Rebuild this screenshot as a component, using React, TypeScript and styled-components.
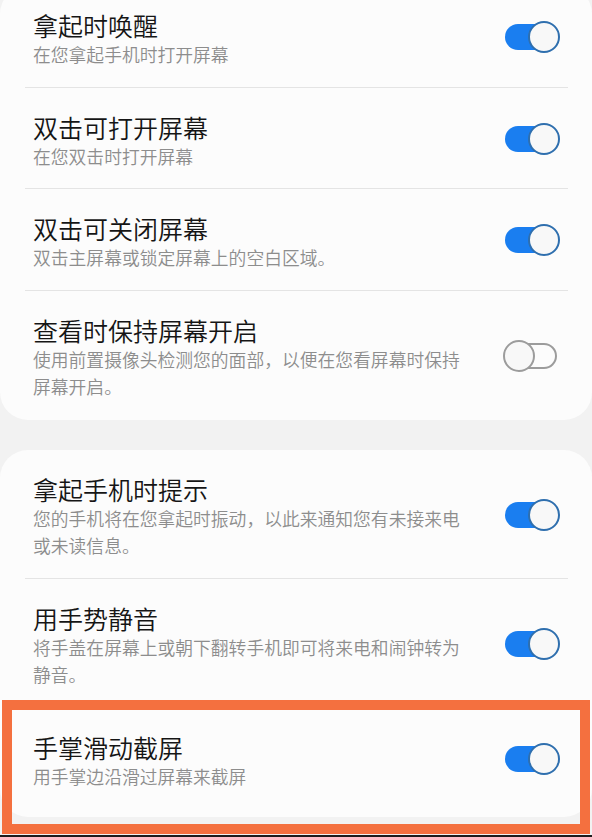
import React from "react";
import styled, { createGlobalStyle } from "styled-components";

const GlobalStyle = createGlobalStyle`
  html, body {
    margin: 0;
    padding: 0;
    background: #f2f2f2;
  }
  body {
    font-family: "Noto Sans CJK SC", "Noto Sans", sans-serif;
  }
`;

const Screen = styled.div`
  width: 592px;
  height: 837px;
  overflow: hidden;
  background: #f2f2f2;
  display: flex;
  flex-direction: column;
`;

const List = styled.div`
  margin-top: -14px;
  display: flex;
  flex-direction: column;
  gap: 30px;
`;

interface ICard {
  bottomPad?: number;
}

const Card = styled.div<ICard>`
  background: #fcfcfc;
  border-radius: 28px;
  padding-bottom: ${props => props.bottomPad || 0}px;
`;

interface IRow {
  divider: boolean;
}

const Row = styled.div<IRow>`
  position: relative;
  display: flex;
  align-items: center;
  justify-content: space-between;
  padding: 23px 33px 19px 33px;
  &::after {
    content: "";
    display: ${props => (props.divider ? "block" : "none")};
    position: absolute;
    left: 25px;
    right: 24px;
    bottom: 0;
    height: 1px;
    background: #e4e4e4;
  }
`;

const TextBlock = styled.div`
  width: 436px;
  display: flex;
  flex-direction: column;
`;

const Title = styled.span`
  font-size: 25px;
  font-weight: 350;
  line-height: 32px;
  color: #151515;
`;

const Subtitle = styled.span`
  font-size: 17.8px;
  font-weight: 350;
  line-height: 27.5px;
  color: #8d8d8d;
`;

interface ISwitch {
  on: boolean;
}

const SwitchTrack = styled.div<ISwitch>`
  position: relative;
  width: 55px;
  height: 32px;
  margin-bottom: 3px;
  flex-shrink: 0;
  &::before {
    content: "";
    position: absolute;
    left: 1px;
    right: 2px;
    top: 3px;
    bottom: 3px;
    border-radius: 14px;
    box-sizing: border-box;
    background: ${props => (props.on ? "#1a7ef0" : "transparent")};
    border: ${props => (props.on ? "none" : "2px solid #9c9c9c")};
  }
`;

const Knob = styled.div<ISwitch>`
  position: absolute;
  top: 0;
  ${props => (props.on ? "right: -1px;" : "left: -1px;")}
  width: 32px;
  height: 32px;
  box-sizing: border-box;
  border-radius: 50%;
  background: #f8f8f8;
  border: 2px solid ${props => (props.on ? "#2f6fae" : "#9c9c9c")};
`;

const Highlight = styled.div`
  position: absolute;
  left: 2px;
  right: 2px;
  top: -8px;
  bottom: -25px;
  border: 10px solid #f4703f;
  pointer-events: none;
`;

const Filler = styled.div`
  flex: 1;
`;

const NavStrip = styled.div`
  height: 2px;
  background: #1c1c1c;
`;

interface ISetting {
  title: string;
  desc: string;
  on: boolean;
}

const firstGroup: ISetting[] = [
  { title: "拿起时唤醒", desc: "在您拿起手机时打开屏幕", on: true },
  { title: "双击可打开屏幕", desc: "在您双击时打开屏幕", on: true },
  { title: "双击可关闭屏幕", desc: "双击主屏幕或锁定屏幕上的空白区域。", on: true },
  {
    title: "查看时保持屏幕开启",
    desc: "使用前置摄像头检测您的面部，以便在您看屏幕时保持屏幕开启。",
    on: false
  }
];

const secondGroup: ISetting[] = [
  {
    title: "拿起手机时提示",
    desc: "您的手机将在您拿起时振动，以此来通知您有未接来电或未读信息。",
    on: true
  },
  {
    title: "用手势静音",
    desc: "将手盖在屏幕上或朝下翻转手机即可将来电和闹钟转为静音。",
    on: true
  },
  { title: "手掌滑动截屏", desc: "用手掌边沿滑过屏幕来截屏", on: true }
];

const Switch: React.FC<{ on: boolean }> = ({ on }) => (
  <SwitchTrack on={on}>
    <Knob on={on} />
  </SwitchTrack>
);

const SettingRow: React.FC<{ item: ISetting; divider: boolean; marked?: boolean }> = ({
  item,
  divider,
  marked
}) => (
  <Row divider={divider}>
    <TextBlock>
      <Title>{item.title}</Title>
      <Subtitle>{item.desc}</Subtitle>
    </TextBlock>
    <Switch on={item.on} />
    {marked && <Highlight />}
  </Row>
);

const App: React.FC = () => (
  <Screen>
    <GlobalStyle />
    <List>
      <Card>
        {firstGroup.map((item, i) => (
          <SettingRow key={item.title} item={item} divider={i < firstGroup.length - 1} />
        ))}
      </Card>
      <Card bottomPad={8}>
        {secondGroup.map((item, i) => (
          <SettingRow
            key={item.title}
            item={item}
            divider={i < secondGroup.length - 1}
            marked={i === secondGroup.length - 1}
          />
        ))}
      </Card>
    </List>
    <Filler />
    <NavStrip />
  </Screen>
);

export default App;
